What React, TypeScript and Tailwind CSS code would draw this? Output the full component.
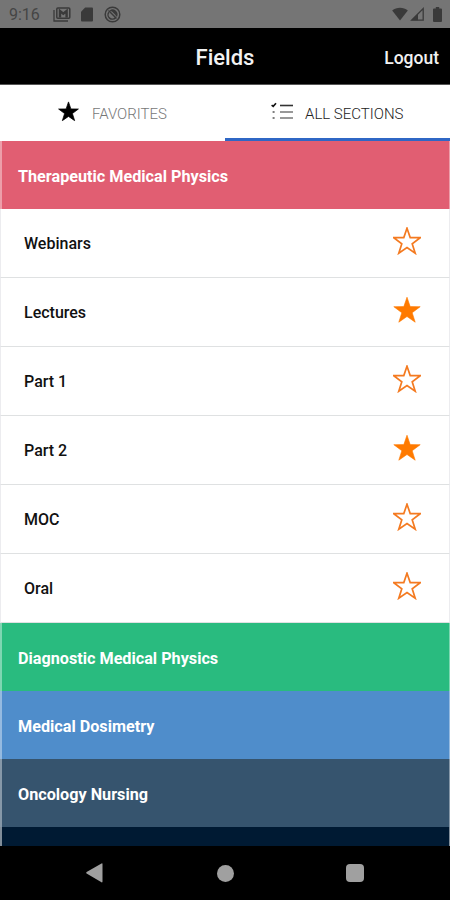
import { useState } from "react";

type Item = {
  name: string;
  favorite: boolean;
};

const initialItems: Item[] = [
  { name: "Webinars", favorite: false },
  { name: "Lectures", favorite: true },
  { name: "Part 1", favorite: false },
  { name: "Part 2", favorite: true },
  { name: "MOC", favorite: false },
  { name: "Oral", favorite: false },
];

const STAR = "M14 1.2 L17.2 10.6 L27.2 10.7 L19.2 16.7 L22.2 26.2 L14 20.5 L5.8 26.2 L8.8 16.7 L0.8 10.7 L10.8 10.6 Z";

function StatusBar() {
  return (
    <div className="flex h-7 shrink-0 items-center bg-[#757575] pl-[9px] pr-2 text-[#3a3a3a]">
      <span className="w-11 pt-0.5 text-[16px] leading-none text-[#454545]">9:16</span>
      {/* mail */}
      <svg className="h-[15px] w-[18px]" viewBox="0 0 18 15" fill="none" stroke="currentColor">
        <path d="M1 3v11h14" strokeWidth="1.3" />
        <rect x="3.8" y="0.9" width="13" height="10.4" rx="1" strokeWidth="1.5" />
        <path d="M7 10.5V4l3.3 2.6L13.6 4v6.5" strokeWidth="2.4" />
      </svg>
      {/* sd card */}
      <svg className="ml-2.5 mt-px h-[15px] w-[12px]" viewBox="0 0 12 15" fill="currentColor">
        <path d="M4.2 0.5H11a1 1 0 0 1 1 1v12a1 1 0 0 1-1 1H1a1 1 0 0 1-1-1V4.7Z" />
      </svg>
      {/* do not sync */}
      <svg className="ml-[11px] h-[17px] w-[17px]" viewBox="0 0 17 17" fill="none" stroke="currentColor">
        <circle cx="8.5" cy="8.5" r="7.3" strokeWidth="1.5" />
        <path d="M4.9 6.2a4.3 4.3 0 0 0 6.6 5.5M12.4 10.4A4.4 4.4 0 0 0 6.2 4.8" strokeWidth="1.5" />
        <path d="M4.5 4.5l8 8" strokeWidth="1.5" />
        <path d="M7.5 5l4.5 4.5V6L9.8 4.5Z" fill="currentColor" stroke="none" />
      </svg>
      <svg className="ml-auto h-[14px] w-[16px]" viewBox="0 0 16 14" fill="currentColor">
        <path d="M8 13.5 0.2 3.4C4.5-.2 11.5-.2 15.8 3.4Z" />
      </svg>
      <svg className="ml-[2px] h-[14px] w-[14px]" viewBox="0 0 14 14">
        <path d="M1.6 13.2 13.2 1.6v11.6Z" fill="none" stroke="currentColor" strokeWidth="1.3" />
        <path d="M1.6 13.2 8 6.8v6.4Z" fill="currentColor" />
      </svg>
      <svg className="ml-[9px] h-[15px] w-[9px]" viewBox="0 0 9 15" fill="currentColor">
        <path d="M2.8 0h3.4v1.6H8a1 1 0 0 1 1 1V14a1 1 0 0 1-1 1H1a1 1 0 0 1-1-1V2.6a1 1 0 0 1 1-1h1.8Z" />
      </svg>
    </div>
  );
}

function Header() {
  return (
    <header className="grid h-[57px] shrink-0 grid-cols-[1fr_auto_1fr] items-center border-b border-[#555] bg-black pt-1.5 text-[#f2f2f2]">
      <span />
      <h1 className="pb-0.5 text-[22px] font-medium leading-none">Fields</h1>
      <button type="button" className="justify-self-end pr-[11px] text-[17.5px] font-medium leading-none">
        Logout
      </button>
    </header>
  );
}

function Tabs() {
  return (
    <nav className="grid h-14 shrink-0 grid-cols-2 bg-white text-[15px]">
      <button type="button" className="flex items-center pl-[58px] text-[#777]">
        <svg className="mb-[3px] h-[21px] w-[21px] text-black" viewBox="0 0 28 28" fill="currentColor">
          <path d={STAR} stroke="currentColor" />
        </svg>
        <span className="ml-[13px] pt-[3px] font-light">FAVORITES</span>
      </button>
      <button type="button" className="flex items-center border-b-[3px] border-[#2f67c5] pl-[46px] pt-[3px] text-[#222]">
        <svg className="mb-[5px] h-[18px] w-[23px]" viewBox="0 0 23 18" fill="none">
          <path d="M0.6 3.2 2.2 4.4 5 1.2" stroke="#111" strokeWidth="1.6" />
          <path d="M9 3.5h13" stroke="#333" strokeWidth="1.6" />
          <path d="M9 10h13M9 16h13" stroke="#777" strokeWidth="1.6" />
          <path d="M1.6 10h2M1.6 16h2" stroke="#555" strokeWidth="1.6" />
        </svg>
        <span className="ml-[11px] pt-0.5 font-light">ALL SECTIONS</span>
      </button>
    </nav>
  );
}

function SectionHeader({ title, color }: { title: string; color: string }) {
  return (
    <div className={`flex h-[68px] items-center border-l-2 border-r border-white/40 px-4 pt-1 text-[16.2px] font-bold text-white ${color}`}>
      {title}
    </div>
  );
}

function ItemRow({ item, onToggle }: { item: Item; onToggle: () => void }) {
  return (
    <li className="flex h-[69px] items-center justify-between border-x border-b border-b-[#dfe1e2] border-x-[#ececef] bg-white pl-[23px] pr-7">
      <span className="pt-0.5 text-[16px] font-medium text-[#111]">{item.name}</span>
      <button type="button" onClick={onToggle} aria-label={item.name} className="mb-1">
        <svg className="h-7 w-7" viewBox="0 0 28 28">
          {item.favorite ? (
            <path d={STAR} fill="#ff7a00" stroke="#ff7a00" strokeWidth="0.6" />
          ) : (
            <path d={STAR} fill="none" stroke="#f47a20" strokeWidth="1.7" />
          )}
        </svg>
      </button>
    </li>
  );
}

function NavBar() {
  return (
    <div className="flex h-[54px] shrink-0 items-center bg-black pl-[86px] text-[#a0a0a0]">
      <svg className="h-5 w-[17px]" viewBox="0 0 17 20" fill="currentColor">
        <path d="M0.6 9 15.5 0.4q1-.5 1 .6v17.6q0 1.2-1 .6L.6 10.6q-.8-.8 0-1.6Z" />
      </svg>
      <span className="ml-[114px] h-[17px] w-[17px] rounded-full bg-[#a0a0a0]" />
      <span className="ml-[112px] h-[18px] w-[18px] rounded-sm bg-[#a0a0a0]" />
    </div>
  );
}

export default function App() {
  const [items, setItems] = useState(initialItems);

  const toggle = (name: string) => {
    setItems(items.map((i) => (i.name === name ? { ...i, favorite: !i.favorite } : i)));
  };

  return (
    <div className="flex h-[900px] w-[450px] flex-col overflow-hidden bg-white font-['Roboto',sans-serif]">
      <StatusBar />
      <Header />
      <Tabs />
      <main className="min-h-0 flex-1 overflow-hidden">
        <SectionHeader title="Therapeutic Medical Physics" color="bg-[#e15e72]" />
        <ul>
          {items.map((item) => (
            <ItemRow key={item.name} item={item} onToggle={() => toggle(item.name)} />
          ))}
        </ul>
        <SectionHeader title="Diagnostic Medical Physics" color="bg-[#29bb7f]" />
        <SectionHeader title="Medical Dosimetry" color="bg-[#4f8dcb]" />
        <SectionHeader title="Oncology Nursing" color="bg-[#36546e]" />
        <div className="h-[68px] border-l-2 border-r border-white/50 bg-[#001a33]" />
      </main>
      <NavBar />
    </div>
  );
}
